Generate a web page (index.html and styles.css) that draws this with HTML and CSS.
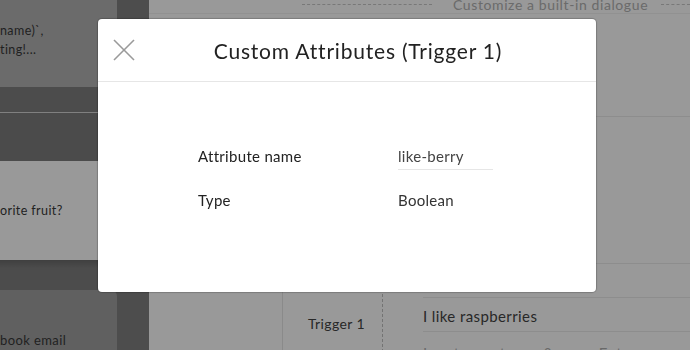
FILE: index.html
```html
<!DOCTYPE html>
<html>
<head lang="en">
    <meta charset="UTF-8">
    <title>Custom Attributes</title>
    <link rel="stylesheet" href="styles.css">
</head>
<body>
<div id="page">
    <div id="sidebar">
        <div class="bubble bubble-top">
            <p>name)`,</p>
            <p>ting!...</p>
        </div>
        <div class="band band-split"></div>
        <div class="bubble bubble-light">
            <p>orite fruit?</p>
        </div>
        <div class="band band-shadow"></div>
        <div class="bubble bubble-bottom">
            <p>book email</p>
        </div>
    </div>
    <div id="gutter"></div>
    <div id="main">
        <div class="section-title">
            <span class="dash dash-left"></span>
            <span class="section-text">Customize a built-in dialogue</span>
            <span class="dash dash-right"></span>
        </div>
        <div class="panel">
            <div class="panel-top">
                <div class="panel-row"></div>
            </div>
            <div class="trigger-group">
                <div class="trigger-name">Trigger 1</div>
                <ul class="responses">
                    <li></li>
                    <li>I like raspberries</li>
                    <li class="placeholder">Input a sentence &amp; press Enter</li>
                </ul>
            </div>
        </div>
    </div>
</div>

<div id="overlay">
    <div class="modal">
        <div class="modal-header">
            <span class="close">
                <svg width="22" height="22" viewBox="0 0 22 22">
                    <line x1="1" y1="1" x2="21" y2="21"/>
                    <line x1="21" y1="1" x2="1" y2="21"/>
                </svg>
            </span>
            <h2>Custom Attributes (Trigger 1)</h2>
        </div>
        <div class="modal-body">
            <div class="field">
                <label>Attribute name</label>
                <div class="value"><span class="input">like-berry</span></div>
            </div>
            <div class="field">
                <label>Type</label>
                <div class="value">Boolean</div>
            </div>
        </div>
    </div>
</div>
</body>
</html>
```

FILE: styles.css
```css
* {
    margin: 0;
    padding: 0;
}

ul {
    list-style: none;
}

body {
    width: 690px;
    height: 350px;
    overflow: hidden;
    font-family: Lato, "Open Sans", sans-serif;
    color: #333;
}

#page {
    display: flex;
    height: 350px;
}

/* 左侧对话列表 */
#sidebar {
    width: 117px;
    background: #7f7f7f;
    display: flex;
    flex-direction: column;
}

.bubble {
    font-size: 12.5px;
    line-height: 19px;
    color: #383838;
    letter-spacing: 0.4px;
}

.bubble-top {
    height: 88px;
    background: #b3b3b3;
    padding-top: 21px;
    box-sizing: border-box;
}

.band-split {
    height: 75px;
    background: linear-gradient(#7f7f7f 25px, #d6d6d6 25px, #d6d6d6 26px, #7d7d7d 26px);
}

.bubble-light {
    height: 100px;
    background: #fff;
    padding-top: 40px;
    box-sizing: border-box;
}

.band-shadow {
    height: 30px;
    background: linear-gradient(#6a6a6a, #7f7f7f 8px);
}

.bubble-bottom {
    flex: 1;
    background: #a0a0a0;
    border-top-right-radius: 6px;
    padding-top: 41px;
    font-size: 13px;
}

#gutter {
    width: 32px;
    background: #808080;
}

/* 右侧主区域 */
#main {
    flex: 1;
    background: #fff;
}

.section-title {
    display: flex;
    align-items: center;
    height: 17px;
    margin-top: -4px;
    border-bottom: 1px solid #f2f2f2;
}

.dash {
    border-top: 1px dashed #c8c8c8;
}

.dash-left {
    width: 130px;
    margin-left: 153px;
}

.dash-right {
    flex: 1;
    margin-left: 13px;
}

.section-text {
    margin-left: 21px;
    font-size: 14px;
    color: #b2b2b2;
    letter-spacing: 0.6px;
}

.panel {
    margin: 8px 0 0 133px;
    border-left: 1px solid #e6e6e6;
}

.panel-top {
    height: 241px;
    border-bottom: 1px solid #ececec;
}

.panel-row {
    height: 94px;
    margin-left: 140px;
    border-bottom: 1px solid #ececec;
}

.trigger-group {
    display: grid;
    grid-template-columns: 100px 1fr;
    align-items: center;
}

.trigger-name {
    font-size: 14px;
    color: #444;
    padding-right: 17px;
    letter-spacing: 0.4px;
    align-self: stretch;
    display: flex;
    align-items: center;
    justify-content: flex-end;
    border-right: 1px dashed #c0c0c0;
}

.responses {
    padding-left: 40px;
}

.responses li {
    height: 29px;
    padding-top: 4px;
    line-height: 29px;
    border-bottom: 1px solid #ececec;
    font-size: 15px;
    color: #444;
    letter-spacing: 0.4px;
}

.responses li.placeholder {
    height: 46px;
    line-height: 34px;
    color: #b0b0b0;
    border-bottom: none;
}

/* 弹窗 */
#overlay {
    position: fixed;
    left: 0;
    top: 0;
    right: 0;
    bottom: 0;
    background: rgba(0, 0, 0, 0.4);
}

.modal {
    width: 498px;
    height: 273px;
    margin: 19px 0 0 98px;
    background: #fff;
    border-radius: 4px;
    box-shadow: 0 0 1px 1px rgba(0, 0, 0, 0.2);
}

.modal-header {
    height: 62px;
    padding: 0 15px;
    display: flex;
    align-items: center;
    border-bottom: 1px solid #e6e6e6;
}

.close {
    width: 22px;
    height: 22px;
    cursor: pointer;
}

.close svg {
    display: block;
    stroke: #9a9a9a;
    stroke-width: 1.6;
}

.modal-header h2 {
    flex: 1;
    text-align: center;
    font-size: 21px;
    font-weight: normal;
    color: #222;
    letter-spacing: 0.8px;
}

.modal-body {
    padding: 52px 0 0 100px;
}

.field {
    display: grid;
    grid-template-columns: 200px auto;
    align-items: center;
    height: 44px;
    font-size: 15px;
    letter-spacing: 0.3px;
}

.field label {
    color: #222;
}

.field .value {
    color: #333;
}

.input {
    display: block;
    width: 95px;
    height: 27px;
    line-height: 29px;
    border-bottom: 1px solid #e6e6e6;
    color: #444;
}
```
